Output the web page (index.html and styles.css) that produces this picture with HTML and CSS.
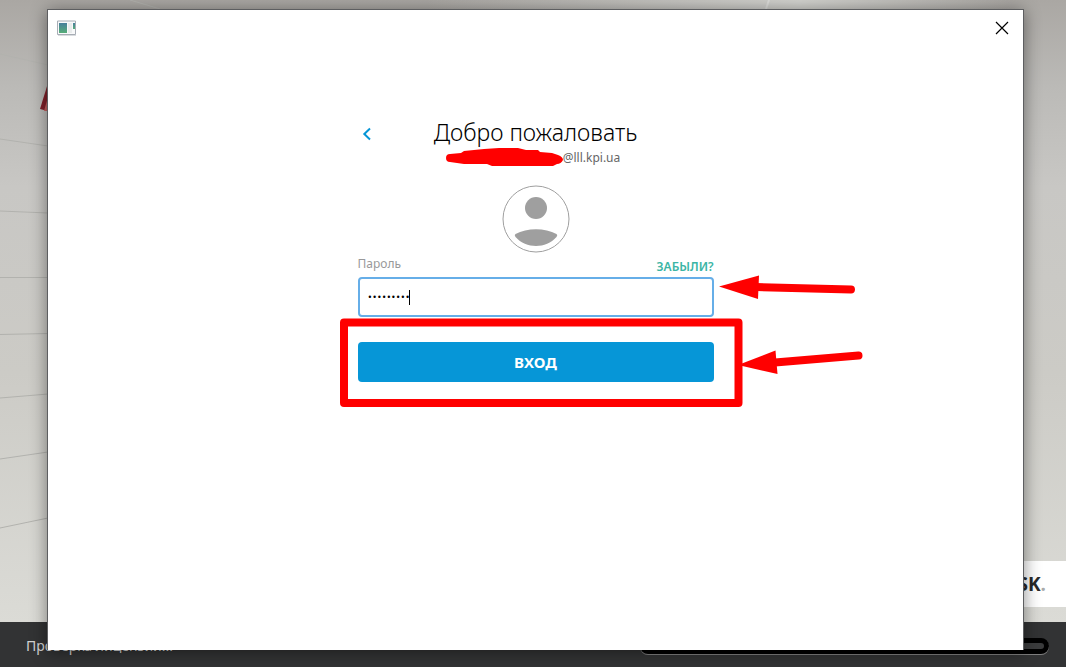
FILE: index.html
```html
<!DOCTYPE html>
<html lang="ru">
<head>
<meta charset="utf-8">
<title>Вход</title>
<link rel="stylesheet" href="styles.css">
</head>
<body>
<div class="splash">
  <div class="wall">
    <svg class="seams" viewBox="0 0 1066 622" preserveAspectRatio="none" fill="none" stroke="#b2b2ae" aria-hidden="true">
      <path d="M0 54L48 65M130 0L160 9M0 139L48 146M0 211L48 213M0 277.500H48M0 334.500L48 333.500M0 398L48 394M0 459L48 452M0 528L48 518"/>
      <path d="M766 9L769 0" stroke="#dededb" stroke-width="2"/>
      <path d="M48 83L40 109L48 111Z" fill="#80202a" stroke="none"/>
      <path d="M48 97L44 111H48Z" fill="#c76060" stroke="none"/>
    </svg>
    <div class="brand">AUTODESK<span class="brand-dot">.</span></div>
  </div>
  <footer class="status">
    <span>Проверка лицензии...</span>
    <div class="progress"></div>
  </footer>
</div>

<main class="dialog">
  <header class="titlebar">
    <svg width="20" height="16" viewBox="0 0 20 16" aria-hidden="true">
      <defs><linearGradient id="screen" x2="0" y2="1"><stop stop-color="#477f9c"/><stop offset="1" stop-color="#56ad78"/></linearGradient></defs>
      <path d="M.5 1H18.500V14.500H.500Z" fill="#f8f9fa" stroke="#a7adb5"/>
      <path d="M1 15.500H19" stroke="#d9dcdf"/>
      <path d="M2 3H10V13H2Z" fill="url(#screen)"/>
      <path d="M11 3H15V13H11Z" fill="#e9ecec"/>
      <path d="M16 3H18V9H16Z" fill="url(#screen)"/>
    </svg>
    <button class="icon-button" type="button" aria-label="Закрыть">
      <svg width="14" height="14" viewBox="0 0 14 14" stroke="#000" stroke-width="1.200"><path d="M1 1L13 13M13 1L1 13"/></svg>
    </button>
  </header>

  <form class="login">
    <div class="heading">
      <button class="icon-button back" type="button" aria-label="Назад">
        <svg width="10" height="14" viewBox="0 0 10 14" fill="none" stroke="#0696d7" stroke-width="2"><path d="M8 1.500L2.300 7L8 12.500"/></svg>
      </button>
      <h1>Добро пожаловать</h1>
    </div>
    <p class="account">
      <svg width="117" height="18" viewBox="0 0 117 18" fill="#f00" aria-hidden="true"><path d="M4 6L15 5L18 3L38 1L53 0H72L80 2H92L94 4L106 5L112 7Q117 9 117 12Q115 16 111 16L107 18H46L41 16H18L4 14A4 4 0 0 1 4 6Z"/></svg>
      <span>@lll.kpi.ua</span>
    </p>
    <svg class="avatar" width="68" height="68" viewBox="0 0 68 68" fill="#9f9f9f" aria-hidden="true">
      <circle cx="34" cy="34" r="33" fill="#fff" stroke="#9f9f9f"/>
      <circle cx="34" cy="23" r="11"/>
      <path d="M13.500 49C25 42.500 43 42.500 54.500 49Q56 50 54.500 52C44 64 24 64 13.500 52Q12 50 13.500 49Z"/>
    </svg>
    <div class="labels">
      <label for="password">Пароль</label>
      <a href="#">ЗАБЫЛИ?</a>
    </div>
    <div class="field">
      <input id="password" type="password" value="password1">
      <span class="caret"></span>
    </div>
    <button class="submit" type="submit">ВХОД</button>

    <svg class="marks" width="530" height="300" viewBox="340 118 530 300" fill="#f00" stroke="#f00" aria-hidden="true">
      <rect x="344" y="322.500" width="394.500" height="80.500" fill="none" stroke-width="8" stroke-linejoin="round"/>
      <path d="M719 286.500L759 275.500L758 299Z" stroke="none"/>
      <path d="M756 287L851 289.500" stroke-width="8" stroke-linecap="round"/>
      <path d="M738 365L775.500 350.500L777.500 374Z" stroke="none"/>
      <path d="M775 362.500L858.500 355.500" stroke-width="8" stroke-linecap="round"/>
    </svg>
  </form>
</main>
</body>
</html>
```
FILE: styles.css
```css
* {
  box-sizing: border-box;
}

body {
  margin: 0;
  position: relative;
  overflow: hidden;
  font-family: "Noto Sans", sans-serif;
}

.splash {
  min-height: 100vh;
  display: flex;
  flex-direction: column;
}

.wall {
  flex: 1;
  position: relative;
  display: flex;
  flex-direction: column;
  justify-content: flex-end;
  padding-bottom: 15px;
  background:
    linear-gradient(90deg, transparent 40%, #d3d3cf 75%, transparent 95%) top / 100% 10px no-repeat,
    linear-gradient(#aaa7a3, #bbbab7 14%, #c8c7c4 30%, #cccbc6 60%, #dbdbd6);
}

.seams {
  position: absolute;
  inset: 0;
  width: 100%;
  height: 100%;
}

.brand {
  position: relative;
  align-self: flex-end;
  width: 40%;
  padding: 0 20px;
  background: #fff;
  color: #292929;
  font: bold 19px/46px "Open Sans", sans-serif;
  text-align: right;
}

.brand-dot {
  color: #aaa;
}

.status {
  display: flex;
  align-items: center;
  justify-content: space-between;
  height: 45px;
  padding: 2px 17px 0 26px;
  background: #323334;
  color: #d2d2d2;
  font-size: 14px;
}

.progress {
  width: 40%;
  height: 16px;
  border: 5px solid #000;
  border-radius: 8px;
  background: #3b3c3d;
  box-shadow: 0 1px #808080;
}

.dialog {
  position: absolute;
  inset: 9px 42px 17px 47px;
  border: 1px solid #5d5e60;
  border-bottom: 0;
  background: #fff;
  box-shadow: 0 2px 16px rgb(0 0 0 / 45%);
}

.titlebar {
  display: flex;
  align-items: center;
  justify-content: space-between;
  height: 36px;
  padding: 0 14px 0 9px;
}

.icon-button {
  display: flex;
  padding: 0;
  border: 0;
  background: none;
}

.login {
  position: relative;
  width: 356px;
  margin: 72px auto 0;
}

.heading {
  display: grid;
  grid-template-columns: 1fr auto 1fr;
  align-items: center;
  height: 30px;
}

.back {
  padding: 2px 0 0 4px;
}

h1 {
  margin: 0;
  padding-bottom: 2px;
  font-size: 23px;
  font-weight: 300;
  line-height: 28px;
}

.account {
  display: flex;
  justify-content: center;
  height: 18px;
  margin: 0;
  padding-right: 5px;
  color: #666;
  font-size: 12px;
  line-height: 20px;
}

.avatar {
  display: block;
  margin: 19px auto 0;
}

.labels {
  display: flex;
  justify-content: space-between;
  height: 24px;
  font-size: 12px;
  line-height: 22px;
}

.labels label {
  color: #999;
}

.labels a {
  padding-top: 3px;
  color: #3bb5a5;
  font-weight: 600;
  text-decoration: none;
}

.field {
  position: relative;
}

.field input {
  display: block;
  width: 100%;
  height: 40px;
  padding: 0 8px;
  border: 2px solid #66aee8;
  border-radius: 4px;
  outline: 0;
  background: #fff;
  color: #000;
  font: 8px "DejaVu Sans", sans-serif;
}

.caret {
  position: absolute;
  top: 13px;
  left: 51px;
  width: 1px;
  height: 15px;
  background: #000;
}

.submit {
  display: block;
  width: 100%;
  height: 40px;
  margin-top: 25px;
  border: 0;
  border-radius: 4px;
  background: #0696d7;
  color: #fff;
  font: bold 15px "Noto Sans", sans-serif;
}

.marks {
  position: absolute;
  top: 0;
  left: -18px;
  pointer-events: none;
}
```
